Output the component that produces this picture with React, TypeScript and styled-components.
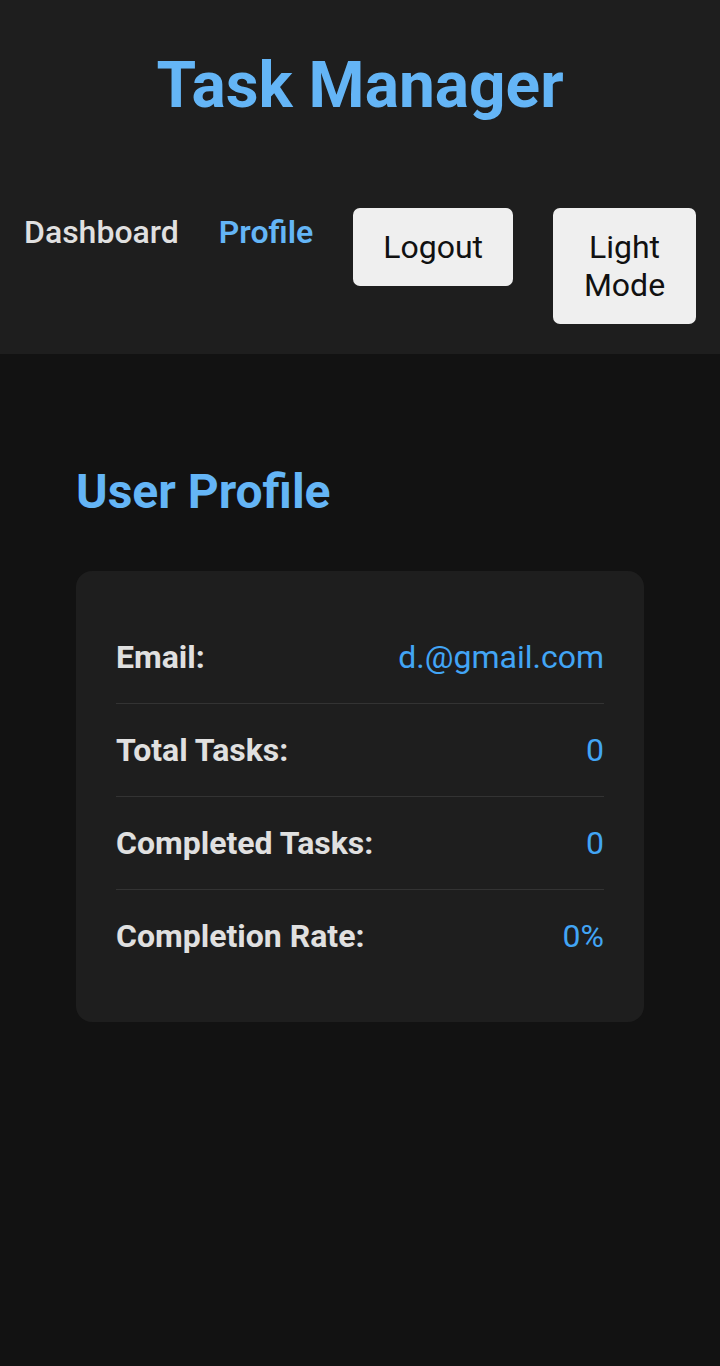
import React from "react";
import styled, { createGlobalStyle } from "styled-components";

const Global = createGlobalStyle`
  html, body { margin: 0; padding: 0; background: #121212; }
  body { font-family: Roboto, "Noto Sans", Arial, sans-serif; color: #e0e0e0; min-height: 1366px; }
  * { box-sizing: border-box; }
`;

const Header = styled.header`
  background: #1e1e1e;
  padding: 48px 24px 30px;
  display: flex;
  flex-direction: column;
  gap: 84px;
`;

const Title = styled.h1`
  margin: 0;
  text-align: center;
  font-size: 64px;
  line-height: 76px;
  font-weight: 700;
  color: #64b5f6;
`;

const Nav = styled.nav`
  display: flex;
  align-items: flex-start;
  gap: 40px;
`;

const NavLink = styled.a<{ $active?: boolean }>`
  font-size: 32px;
  line-height: 38px;
  font-weight: ${(p) => (p.$active ? 600 : 500)};
  padding-top: 5px;
  color: ${(p) => (p.$active ? "#64b5f6" : "#e0e0e0")};
  text-decoration: none;
  white-space: nowrap;
  flex-shrink: 0;
`;

const Button = styled.button<{ $fill?: boolean }>`
  font-family: Roboto, "Noto Sans", Arial, sans-serif;
  font-size: 32px;
  line-height: 38px;
  font-weight: 400;
  color: #111;
  background: #efefef;
  border: none;
  border-radius: 7px;
  padding: 20px 30px;
  min-width: 0;
  flex: ${(p) => (p.$fill ? "1 1 0" : "0 0 auto")};
`;

const Main = styled.main`
  padding: 109px 76px 40px;
`;

const Heading = styled.h2`
  margin: 0 0 50px;
  font-size: 48px;
  line-height: 58px;
  font-weight: 700;
  color: #64b5f6;
`;

const Card = styled.section`
  background: #1e1e1e;
  border-radius: 16px;
  padding: 40px;
`;

const Row = styled.div`
  display: flex;
  justify-content: space-between;
  align-items: center;
  padding: 27px 0;
  border-bottom: 1px solid #333;
  &:last-child { border-bottom: none; }
`;

const Label = styled.span`
  font-size: 32px;
  line-height: 38px;
  font-weight: 700;
  color: #e0e0e0;
`;

const Value = styled.span`
  font-size: 32px;
  line-height: 38px;
  font-weight: 400;
  color: #42a5f5;
`;

const rows: [string, string][] = [
  ["Email:", "d.@gmail.com"],
  ["Total Tasks:", "0"],
  ["Completed Tasks:", "0"],
  ["Completion Rate:", "0%"],
];

export default function App() {
  return (
    <>
      <Global />
      <Header>
        <Title>Task Manager</Title>
        <Nav>
          <NavLink href="#">Dashboard</NavLink>
          <NavLink href="#" $active>Profile</NavLink>
          <Button>Logout</Button>
          <Button $fill>Light Mode</Button>
        </Nav>
      </Header>
      <Main>
        <Heading>User Profile</Heading>
        <Card>
          {rows.map(([l, v]) => (
            <Row key={l}>
              <Label>{l}</Label>
              <Value>{v}</Value>
            </Row>
          ))}
        </Card>
      </Main>
    </>
  );
}
